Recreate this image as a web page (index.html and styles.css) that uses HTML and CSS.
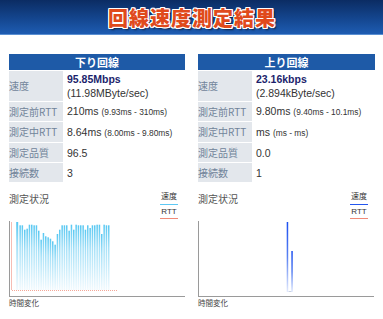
FILE: index.html
```html
<!DOCTYPE html>
<html lang="ja">

<head>
    <meta charset="UTF-8">
    <meta name="viewport" content="width=device-width, initial-scale=1.0">
    <title>回線速度測定結果</title>
    <link rel="stylesheet" href="styles.css">
</head>

<body>
    <header class="banner">
        <h1>回線速度測定結果</h1>
    </header>

    <div class="columns">
        <table class="result">
            <tr>
                <th colspan="2">下り回線</th>
            </tr>
            <tr class="tall">
                <td class="label">速度</td>
                <td class="value"><b class="speed">95.85Mbps</b><br>(11.98MByte/sec)</td>
            </tr>
            <tr>
                <td class="label">測定前RTT</td>
                <td class="value">210ms <small>(9.93ms - 310ms)</small></td>
            </tr>
            <tr class="r20">
                <td class="label">測定中RTT</td>
                <td class="value">8.64ms <small>(8.00ms - 9.80ms)</small></td>
            </tr>
            <tr>
                <td class="label">測定品質</td>
                <td class="value">96.5</td>
            </tr>
            <tr>
                <td class="label">接続数</td>
                <td class="value">3</td>
            </tr>
        </table>

        <table class="result">
            <tr>
                <th colspan="2">上り回線</th>
            </tr>
            <tr class="tall">
                <td class="label">速度</td>
                <td class="value"><b class="speed">23.16kbps</b><br>(2.894kByte/sec)</td>
            </tr>
            <tr>
                <td class="label">測定前RTT</td>
                <td class="value">9.80ms <small>(9.40ms - 10.1ms)</small></td>
            </tr>
            <tr class="r20">
                <td class="label">測定中RTT</td>
                <td class="value">ms <small>(ms - ms)</small></td>
            </tr>
            <tr>
                <td class="label">測定品質</td>
                <td class="value">0.0</td>
            </tr>
            <tr>
                <td class="label">接続数</td>
                <td class="value">1</td>
            </tr>
        </table>
    </div>

    <div class="columns charts">
        <section class="chart">
            <div class="chart-head">
                <span class="chart-title">測定状況</span>
                <div class="legend">
                    <span class="key">速度</span>
                    <span class="swatch down"></span>
                    <span class="key rtt">RTT</span>
                    <span class="swatch red"></span>
                </div>
            </div>
            <svg class="plot" width="177" height="78" viewBox="9 219 177 78">
                <defs>
                    <linearGradient id="cyan" x1="0" y1="0" x2="0" y2="1">
                        <stop offset="0" stop-color="#58c8f2" />
                        <stop offset="0.35" stop-color="#a6e1f8" />
                        <stop offset="1" stop-color="#f2fafe" />
                    </linearGradient>
                </defs>
                <line x1="11.5" y1="222" x2="11.5" y2="290" stroke="#f6bdb4" />
                <line x1="12" y1="290.5" x2="118" y2="290.5" stroke="#f3a798" stroke-dasharray="1 1" />
                <g fill="url(#cyan)">
                    <rect x="16.2" y="222" width="2" height="68" />
                    <rect x="19.4" y="225.3" width="1.5" height="64.7" />
                    <rect x="21.6" y="225.3" width="1.5" height="64.7" />
                    <rect x="24" y="229.7" width="1.5" height="60.3" />
                    <rect x="26.4" y="228.7" width="1.5" height="61.3" />
                    <rect x="28.7" y="224.7" width="1.5" height="65.3" />
                    <rect x="31" y="224.7" width="1.5" height="65.3" />
                    <rect x="33.4" y="225.3" width="1.5" height="64.7" />
                    <rect x="35.7" y="225.3" width="1.5" height="64.7" />
                    <rect x="38" y="230.7" width="1.5" height="59.3" />
                    <rect x="40.4" y="239.7" width="1.5" height="50.3" />
                    <rect x="42.7" y="233" width="1.5" height="57" />
                    <rect x="45" y="236.3" width="1.5" height="53.7" />
                    <rect x="47.4" y="237.3" width="1.5" height="52.7" />
                    <rect x="49.7" y="238.7" width="1.5" height="51.3" />
                    <rect x="52" y="241.3" width="1.5" height="48.7" />
                    <rect x="54.4" y="244.7" width="1.5" height="45.3" />
                    <rect x="56.7" y="234" width="1.5" height="56" />
                    <rect x="59" y="229.7" width="1.5" height="60.3" />
                    <rect x="61.4" y="225.3" width="1.5" height="64.7" />
                    <rect x="63.7" y="225.3" width="1.5" height="64.7" />
                    <rect x="66" y="225.3" width="1.5" height="64.7" />
                    <rect x="68.4" y="230.7" width="1.5" height="59.3" />
                    <rect x="70.7" y="224.7" width="1.5" height="65.3" />
                    <rect x="73" y="229.7" width="1.5" height="60.3" />
                    <rect x="75.4" y="224.7" width="1.5" height="65.3" />
                    <rect x="77.7" y="225.3" width="1.5" height="64.7" />
                    <rect x="80" y="225.3" width="1.5" height="64.7" />
                    <rect x="82.4" y="225.3" width="1.5" height="64.7" />
                    <rect x="84.7" y="229.7" width="1.5" height="60.3" />
                    <rect x="87" y="225.3" width="1.5" height="64.7" />
                    <rect x="89.4" y="228" width="1.5" height="62" />
                    <rect x="91.7" y="225.3" width="1.5" height="64.7" />
                    <rect x="94" y="225.3" width="1.5" height="64.7" />
                    <rect x="96.4" y="224.7" width="1.5" height="65.3" />
                    <rect x="98.7" y="224.7" width="1.5" height="65.3" />
                    <rect x="101" y="234" width="1.5" height="56" />
                    <rect x="103.4" y="224.7" width="1.5" height="65.3" />
                    <rect x="105.7" y="225.3" width="1.5" height="64.7" />
                    <rect x="108" y="225.3" width="1.5" height="64.7" />
                </g>
                <line x1="9.5" y1="221" x2="9.5" y2="297" stroke="#9a9a9a" />
                <line x1="9" y1="296.5" x2="185" y2="296.5" stroke="#9a9a9a" />
            </svg>
            <p class="caption">時間変化</p>
        </section>

        <section class="chart">
            <div class="chart-head">
                <span class="chart-title">測定状況</span>
                <div class="legend">
                    <span class="key">速度</span>
                    <span class="swatch up"></span>
                    <span class="key rtt">RTT</span>
                    <span class="swatch red"></span>
                </div>
            </div>
            <svg class="plot" width="177" height="78" viewBox="198 219 177 78">
                <defs>
                    <linearGradient id="blue" x1="0" y1="0" x2="0" y2="1">
                        <stop offset="0" stop-color="#1c4ff0" />
                        <stop offset="0.5" stop-color="#5a82f2" />
                        <stop offset="1" stop-color="#e4ebfd" />
                    </linearGradient>
                </defs>
                <path d="M288.5 291.5 H292" stroke="#c9d2e4" fill="none" />
                <g fill="url(#blue)">
                    <rect x="286.7" y="222" width="1.5" height="70" />
                    <rect x="291.3" y="251" width="1.5" height="41" />
                </g>
                <line x1="198.5" y1="221" x2="198.5" y2="297" stroke="#9a9a9a" />
                <line x1="198" y1="296.5" x2="374" y2="296.5" stroke="#9a9a9a" />
            </svg>
            <p class="caption">時間変化</p>
        </section>
    </div>
</body>

</html>
```

FILE: styles.css
```css
body {
    margin: 0;
    padding: 0;
    background: #fff;
    color: #333;
    font-family: 'Liberation Sans', Arial, sans-serif;
}

.banner {
    height: 34px;
    border-bottom: 1px solid #5a8fd2;
    background: linear-gradient(to bottom, #0b2c63, #14468f 55%, #1e5cb2);
    text-align: center;
}

.banner h1 {
    margin: 0;
    padding: 1px 0 0 1px;
    line-height: 34px;
    font-family: 'Noto Sans CJK JP', sans-serif;
    font-size: 20px;
    font-weight: 900;
    letter-spacing: 1px;
    color: #e04a1c;
    text-shadow:
        -1px -1px 0 #fff, 1px -1px 0 #fff, -1px 1px 0 #fff, 1px 1px 0 #fff,
        0 -1px 0 #fff, 0 1px 0 #fff, -1px 0 0 #fff, 1px 0 0 #fff,
        2px 2px 2px rgba(0, 0, 0, 0.6);
}

.columns {
    display: grid;
    grid-template-columns: 176px 177px;
    column-gap: 13px;
    padding: 18px 0 0 9px;
}

.result {
    border-collapse: separate;
    border-spacing: 0 1px;
    width: 100%;
}

.result th {
    height: 16px;
    padding: 0;
    background: #1e5aa7;
    color: #fff;
    font-family: 'Noto Sans CJK JP', sans-serif;
    font-size: 11px;
    font-weight: bold;
    line-height: 16px;
}

.result td {
    height: 19px;
    padding: 0;
    vertical-align: middle;
}

.result tr.tall td {
    height: 30px;
}

.result tr.r20 td {
    height: 20px;
}

.label {
    width: 54px;
    background: #e3e7ec;
    color: #71849a;
    font-family: 'Noto Sans CJK JP', sans-serif;
    font-size: 10px;
    line-height: 12px;
}

.value {
    padding-left: 4px !important;
    font-size: 10.5px;
    line-height: 14px;
    color: #333;
}

.speed {
    color: #1c1f6c;
}

.value small {
    font-size: 8.4px;
}

.charts {
    padding-top: 7px;
}

.chart-head {
    display: flex;
    justify-content: space-between;
    height: 29px;
}

.chart-title {
    margin-top: 2px;
    font-family: 'Noto Sans CJK JP', sans-serif;
    font-size: 10px;
    line-height: 14px;
    color: #555;
}

.legend {
    display: flex;
    flex-direction: column;
    align-items: center;
    width: 18px;
    margin-right: 7px;
    padding-top: 1px;
}

.key {
    font-family: 'Noto Sans CJK JP', sans-serif;
    font-size: 8px;
    line-height: 10px;
    color: #333;
}

.key.rtt {
    margin-top: 2px;
    font-family: 'Liberation Sans', Arial, sans-serif;
}

.swatch {
    display: block;
    width: 18px;
    height: 2px;
    margin-top: 3px;
}

.swatch.red {
    margin-top: 1px;
    background: #f08a78;
}

.swatch.down {
    background: #5cc8f4;
}

.swatch.up {
    background: #2356ee;
}

.plot {
    display: block;
}

.caption {
    margin: 1px 0 0;
    font-family: 'Noto Sans CJK JP', sans-serif;
    font-size: 7.5px;
    line-height: 10px;
    color: #444;
}
```
